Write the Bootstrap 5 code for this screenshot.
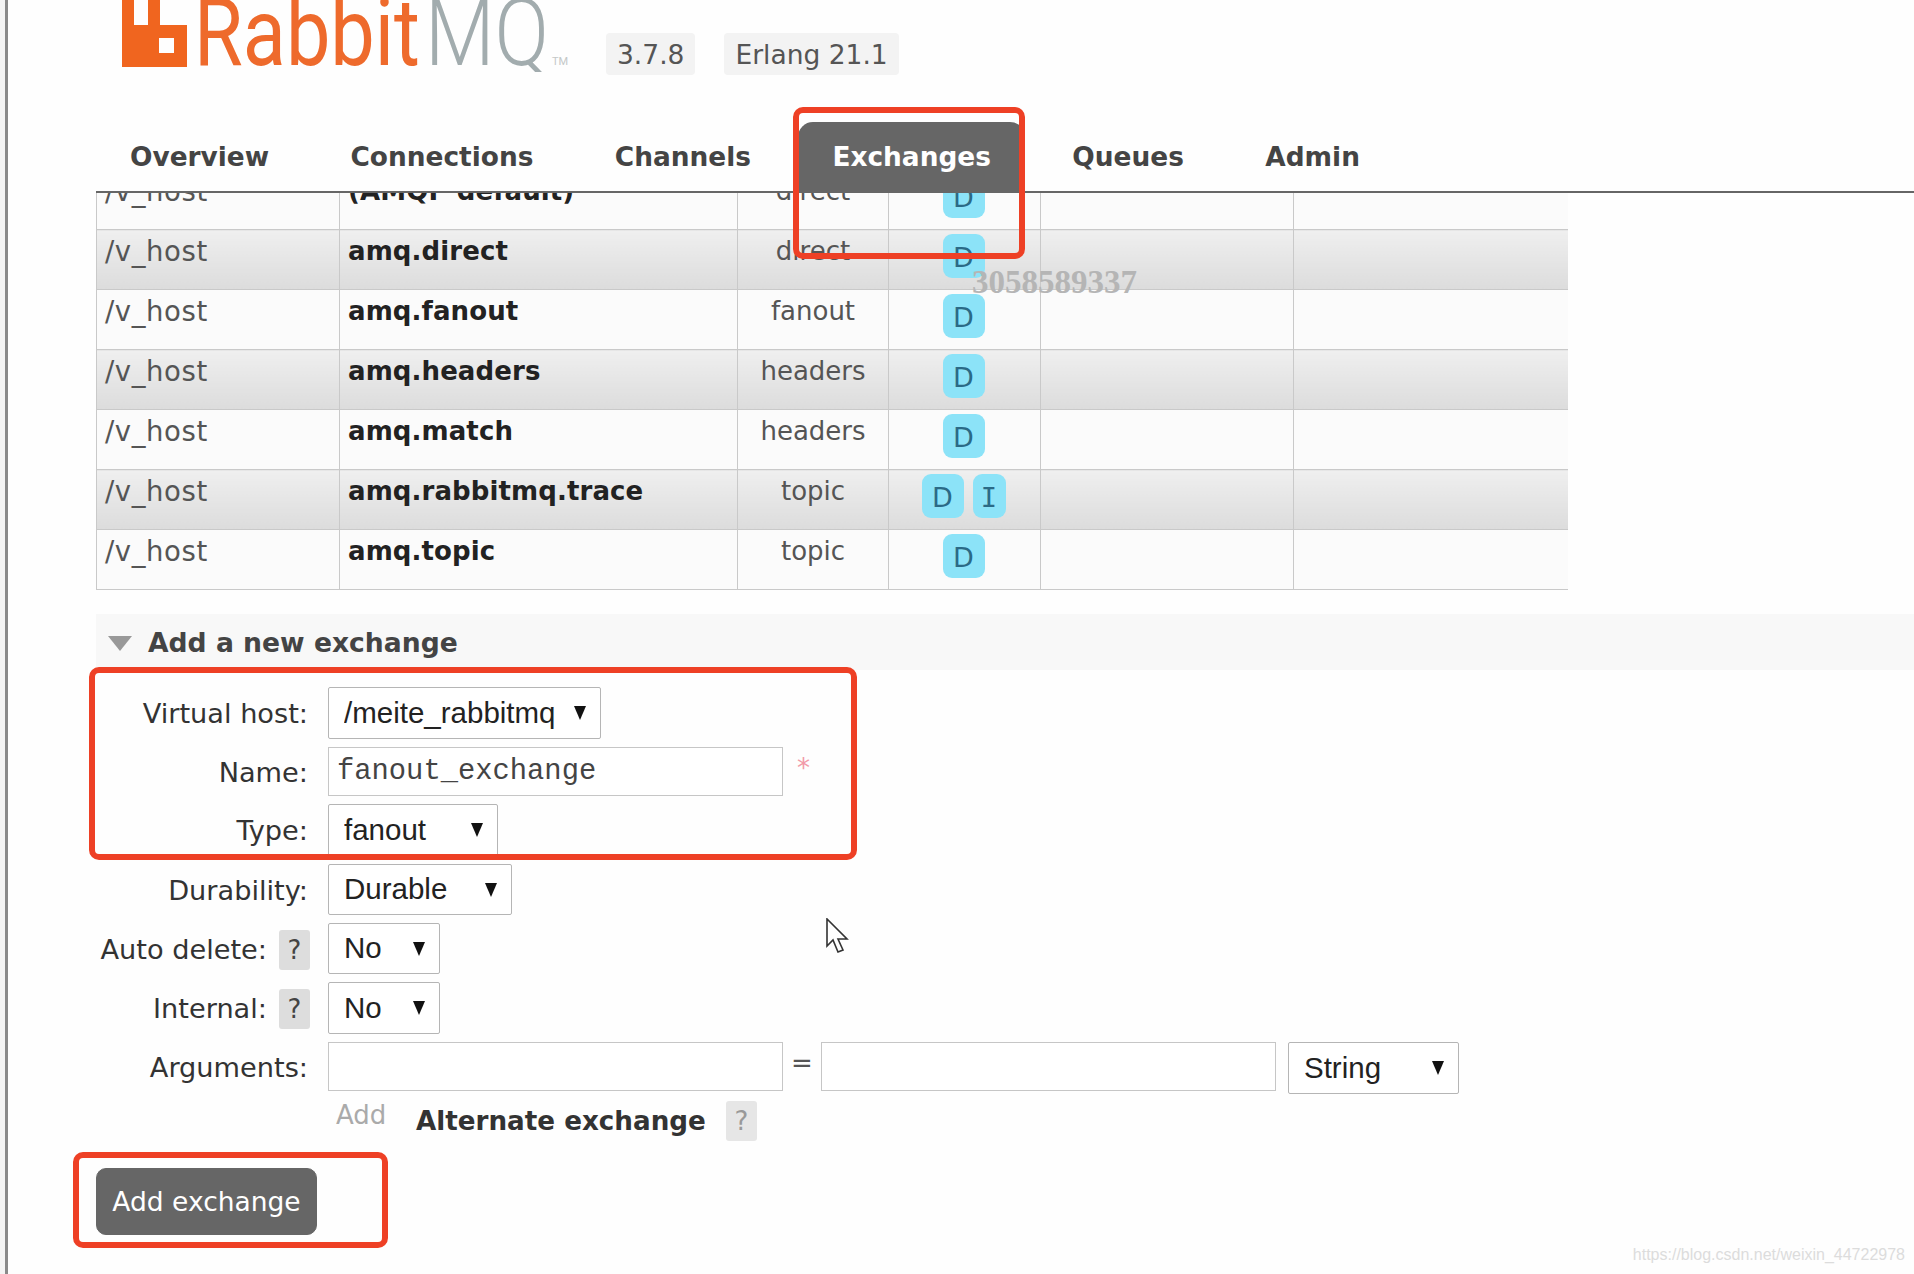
<!DOCTYPE html>
<html lang="en">
<head>
<meta charset="utf-8">
<title>RabbitMQ Management</title>
<link href="https://cdn.jsdelivr.net/npm/bootstrap@5.3.0/dist/css/bootstrap.min.css" rel="stylesheet">
<style>
html,body{height:1274px;overflow:hidden}
body{background:#fefefe;color:#444;font-family:"DejaVu Sans",sans-serif;font-size:28px;position:relative}
.rail{width:8px;flex:none;background:#f4f4f4;border-right:3px solid #8a8a8a}
.pagebody{padding-left:88px;min-width:0}
.topbar{height:122px;gap:29px}
.logo{display:block;margin-left:26px;margin-right:5px}
.logo text{font-family:Roboto,"Liberation Sans",sans-serif;font-weight:300;font-size:94px}
.logo text.brandw{font-weight:400}
.verbadge{margin-top:33px;height:42px;line-height:44px;padding:0 11px;background:#f3f3f3;border-radius:4px;color:#555;font-size:26.5px}
.tabs{border-bottom:2px solid #666;gap:13.4px;height:71px;flex-wrap:nowrap}
.tabs .nav-link{height:70px;line-height:70px;padding:0 34px;font-weight:700;font-size:26.4px;color:#444;border-radius:15px 15px 0 0}
.tabs .nav-link.active{background:#666;color:#fff}
.tablewrap{overflow:hidden;width:1472px;height:397px;margin-bottom:24px}
.xtable{table-layout:fixed;width:1472px;margin:-24px 0 0;border-collapse:collapse;--bs-table-bg:transparent;color:#555}
.xtable td{height:60px;padding:4px 8px 0;border:1px solid #c9c9c9;font-size:27.5px;line-height:34px;vertical-align:top;background:#fbfbfb;color:#555;box-shadow:none}
.xtable tr.alt td{background:linear-gradient(#efefef,#dcdcdc)}
.xtable td.vh{letter-spacing:.6px}
.xtable td.nm{font-weight:700;font-size:26px;color:#222;letter-spacing:.1px}
.xtable td.ty{text-align:center;padding-left:0;padding-right:0;font-size:26px}
.xtable td.fe{padding:4px 2px 0 0;text-align:center}
.c1{width:243px}.c2{width:398px}.c3{width:151px}.c4{width:152px}.c5{width:253px}.c6{width:275px}
.tagd{display:inline-block;width:42px;height:44px;line-height:47px;background:#8ce3f8;border-radius:9px;color:#2b6a86;font-size:27px;text-align:center;vertical-align:top}
.tagd.narrow{width:33px;margin-left:9px;font-family:"DejaVu Sans Mono",monospace}
.sechead{height:56px;background:#f8f8f8;margin-bottom:17px;font-weight:700;font-size:26.6px;color:#444;padding:2px 0 0 12px;gap:16px}
.tri{width:0;height:0;border-left:12px solid transparent;border-right:12px solid transparent;border-top:15px solid #999}
.frm{gap:8px}
.fl{font-size:27.2px;color:#333;width:232px;padding-right:20px;flex:none;gap:12px;white-space:nowrap;margin-top:3px}
.fl .helpq{margin-right:-2px}
.helpq{display:inline-block;width:31px;height:40px;line-height:40px;text-align:center;background:#ddd;border-radius:3px;color:#444;font-size:26px}
.sel{font-family:"Liberation Sans",Arial,sans-serif;font-size:29.5px;color:#222;height:52px;padding:0 0 0 15px;border:1px solid #b5b5b5;border-radius:2px;background-color:#fff;background-image:url("data:image/svg+xml,%3csvg xmlns='http://www.w3.org/2000/svg' viewBox='0 0 12 14'%3e%3cpath fill='%23111' d='M0 0h12L6 14z'/%3e%3c/svg%3e");background-size:12px 14px;background-position:right 14px center;background-repeat:no-repeat;box-shadow:none}
.s1{width:273px}.s2{width:170px}.s3{width:184px;height:51px}.s4{width:112px;height:51px}.s5{width:171px;margin-left:12px}
.s4b{width:112px}
.inp{width:455px;height:49px;border:1px solid #c6c6c6;border-radius:0;padding:0 8px;font-family:"Liberation Mono",monospace;font-size:28.8px;color:#444;background:#fff;box-shadow:none}
.reqstar{color:#f29aa8;font-size:26px;margin:-8px 0 0 14px;line-height:1}
.eq{width:38px;text-align:center;font-size:26px;color:#555;margin-top:2px}
.argl{margin-top:6px}
.addrow{margin-left:240px;height:59px;margin-top:7px}
.addl{color:#aaa;font-size:26px;width:80px;margin-top:-5px}
.alth{font-weight:700;font-size:26.2px;color:#333;margin-top:1px;margin-right:20px}
.helpq.faint{background:#e6e6e6;color:#999;height:40px}
.subbtn{--bs-btn-bg:#666;--bs-btn-color:#fff;--bs-btn-border-color:#666;--bs-btn-hover-bg:#666;--bs-btn-hover-color:#fff;width:221px;height:67px;border-radius:10px;font-size:26.5px;font-family:"DejaVu Sans",sans-serif;padding:0;margin-top:8px}
.hilite{position:absolute;border:6px solid #ee4025;border-radius:10px;pointer-events:none}
.h1x{left:793px;top:107px;width:232px;height:152px}
.h2x{left:89px;top:667px;width:768px;height:193px}
.h3x{left:73px;top:1152px;width:315px;height:96px}
.wm1{position:absolute;left:972px;top:262px;font-family:"Liberation Serif",serif;font-weight:700;font-size:33px;color:#b5b5b5;line-height:40px}
.wm2{position:absolute;right:9px;top:1244px;font-family:"Liberation Sans",sans-serif;font-size:16px;color:#dcdcdc;line-height:22px;white-space:nowrap}
.curs{position:absolute;left:825px;top:918px}
</style>
</head>
<body class="d-flex">
<div class="rail"></div>
<main class="pagebody flex-grow-1">
  <header class="topbar d-flex align-items-start">
    <svg class="logo" width="450" height="72" viewBox="0 0 450 72" xmlns="http://www.w3.org/2000/svg">
      <path fill="#f0651f" fill-rule="evenodd" d="M0 0h12v25h14V0h12v25h27v42H0zM37 38v15h15V38z"/>
      <text class="brandw" x="72" y="65" fill="#ee6a2c" textLength="226" lengthAdjust="spacingAndGlyphs">Rabbit</text>
      <text x="303" y="65" fill="#a2acae" textLength="124" lengthAdjust="spacingAndGlyphs">MQ</text>
      <text x="430" y="65" fill="#c4c8c8" style="font-size:11px;font-weight:400">TM</text>
    </svg>
    <span class="verbadge">3.7.8</span>
    <span class="verbadge">Erlang 21.1</span>
  </header>
  <ul class="nav tabs">
    <li class="nav-item"><a class="nav-link" href="#">Overview</a></li>
    <li class="nav-item"><a class="nav-link" href="#">Connections</a></li>
    <li class="nav-item"><a class="nav-link" href="#">Channels</a></li>
    <li class="nav-item"><a class="nav-link active" href="#">Exchanges</a></li>
    <li class="nav-item"><a class="nav-link" href="#">Queues</a></li>
    <li class="nav-item"><a class="nav-link" href="#">Admin</a></li>
  </ul>
  <div class="tablewrap">
    <table class="table xtable">
      <colgroup><col class="c1"><col class="c2"><col class="c3"><col class="c4"><col class="c5"><col class="c6"></colgroup>
      <tbody>
        <tr><td class="vh">/v_host</td><td class="nm">(AMQP default)</td><td class="ty">direct</td><td class="fe"><span class="tagd">D</span></td><td></td><td></td></tr>
        <tr class="alt"><td class="vh">/v_host</td><td class="nm">amq.direct</td><td class="ty">direct</td><td class="fe"><span class="tagd">D</span></td><td></td><td></td></tr>
        <tr><td class="vh">/v_host</td><td class="nm">amq.fanout</td><td class="ty">fanout</td><td class="fe"><span class="tagd">D</span></td><td></td><td></td></tr>
        <tr class="alt"><td class="vh">/v_host</td><td class="nm">amq.headers</td><td class="ty">headers</td><td class="fe"><span class="tagd">D</span></td><td></td><td></td></tr>
        <tr><td class="vh">/v_host</td><td class="nm">amq.match</td><td class="ty">headers</td><td class="fe"><span class="tagd">D</span></td><td></td><td></td></tr>
        <tr class="alt"><td class="vh">/v_host</td><td class="nm">amq.rabbitmq.trace</td><td class="ty">topic</td><td class="fe"><span class="tagd">D</span><span class="tagd narrow">I</span></td><td></td><td></td></tr>
        <tr><td class="vh">/v_host</td><td class="nm">amq.topic</td><td class="ty">topic</td><td class="fe"><span class="tagd">D</span></td><td></td><td></td></tr>
      </tbody>
    </table>
  </div>
  <div class="sechead d-flex align-items-center"><span class="tri"></span><span>Add a new exchange</span></div>
  <form class="frm d-flex flex-column">
    <div class="d-flex align-items-center"><label class="fl text-end">Virtual host:</label><select class="form-select sel s1"><option>/meite_rabbitmq</option></select></div>
    <div class="d-flex align-items-center"><label class="fl text-end">Name:</label><input class="inp" type="text" value="fanout_exchange"><span class="reqstar">*</span></div>
    <div class="d-flex align-items-center"><label class="fl text-end">Type:</label><select class="form-select sel s2"><option>fanout</option></select></div>
    <div class="d-flex align-items-center"><label class="fl text-end">Durability:</label><select class="form-select sel s3"><option>Durable</option></select></div>
    <div class="d-flex align-items-center"><label class="fl d-flex justify-content-end align-items-center">Auto delete:<span class="helpq">?</span></label><select class="form-select sel s4"><option>No</option></select></div>
    <div class="d-flex align-items-center"><label class="fl d-flex justify-content-end align-items-center">Internal:<span class="helpq">?</span></label><select class="form-select sel s4b"><option>No</option></select></div>
    <div class="d-flex align-items-start"><label class="fl argl text-end">Arguments:</label><input class="inp" type="text"><span class="eq">=</span><input class="inp" type="text"><select class="form-select sel s5"><option>String</option></select></div>
  </form>
  <div class="addrow d-flex align-items-start">
    <span class="addl">Add</span><span class="alth">Alternate exchange</span><span class="helpq faint">?</span>
  </div>
  <button type="button" class="btn subbtn">Add exchange</button>
</main>
<div class="hilite h1x"></div>
<div class="hilite h2x"></div>
<div class="hilite h3x"></div>
<div class="wm1">3058589337</div>
<div class="wm2">https://blog.csdn.net/weixin_44722978</div>
<svg class="curs" width="24" height="36" viewBox="0 0 24 36" xmlns="http://www.w3.org/2000/svg"><path fill="#fff" stroke="#333" stroke-width="1.6" d="M2 1v27l6-6 5 12 5-2-5-11h9z"/></svg>
</body>
</html>
